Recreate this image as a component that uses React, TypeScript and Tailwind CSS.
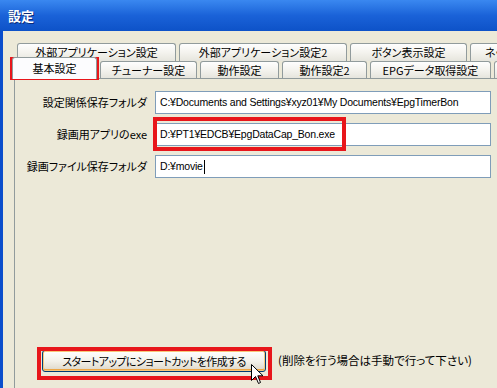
import React from 'react';

type TabDef = { label: string; w: string };

const row1: TabDef[] = [
  { label: '外部アプリケーション設定', w: 'w-[159px]' },
  { label: '外部アプリケーション設定2', w: 'w-[168px]' },
  { label: 'ボタン表示設定', w: 'w-[117px]' },
  { label: 'ネットワーク設定', w: 'w-[110px]' },
];

const row2: TabDef[] = [
  { label: 'チューナー設定', w: 'w-[97px]' },
  { label: '動作設定', w: 'w-[79px]' },
  { label: '動作設定2', w: 'w-[85px]' },
  { label: 'EPGデータ取得設定', w: 'w-[121px]' },
  { label: 'その他', w: 'w-[80px]' },
];

const Tab = ({ label, w }: TabDef) => (
  <div
    className={`${w} flex h-full shrink-0 justify-center overflow-hidden whitespace-nowrap rounded-t-[3px] border border-b-0 border-[#919B9C] bg-gradient-to-b from-[#FEFEFE] via-[#F4F3EE] to-[#E6E5DD] pt-[1px] leading-[14px]`}
  >
    {label}
  </div>
);

const fields = [
  { label: '設定関係保存フォルダ', value: 'C:¥Documents and Settings¥xyz01¥My Documents¥EpgTimerBon' },
  { label: '録画用アプリのexe', value: 'D:¥PT1¥EDCB¥EpgDataCap_Bon.exe' },
  { label: '録画ファイル保存フォルダ', value: 'D:¥movie', caret: true },
];

const Cursor = () => (
  <svg className="absolute left-[251px] top-[364px]" width="13" height="21" viewBox="0 0 13 21">
    <path d="M0.5 0.5 V16.5 L4.5 12.5 L7.5 19.5 L9.5 18.5 L6.8 11.8 H12 Z" fill="#fff" stroke="#000" strokeWidth="1" />
  </svg>
);

export default function App() {
  return (
    <div className="relative flex h-[388px] w-[497px] flex-col overflow-hidden bg-[#ECE9D8] font-['Noto_Sans_CJK_JP',sans-serif] text-[11px] text-black [font-feature-settings:'palt']">
      {/* title bar */}
      <div className="flex h-[31px] shrink-0 items-center bg-gradient-to-b from-[#3A88F0] via-[#1A62D8] to-[#0D52C8] pl-[8px]">
        <span className="text-[13px] font-bold text-white [text-shadow:1px_1px_0_#0A2A7A]">設定</span>
      </div>

      <div className="flex flex-1 flex-col border-l-[3px] border-[#0B4ECC]">
        {/* tab rows */}
        <div className="ml-[14px] mt-[12px] flex h-[18px] gap-[3px]">
          {row1.map((t) => (
            <Tab key={t.label} {...t} />
          ))}
        </div>
        <div className="flex h-[17px] items-end">
          <div className="relative z-10 ml-[9px] mr-[3px] flex h-[22px] w-[85px] shrink-0 justify-center self-start -mt-[4px] rounded-t-[3px] border border-b-0 border-[#919B9C] bg-[#FCFCFE] pt-[3px] leading-[14px]">
            基本設定
          </div>
          <div className="flex h-full gap-[3px]">
            {row2.map((t) => (
              <Tab key={t.label} {...t} />
            ))}
          </div>
        </div>

        {/* tab page */}
        <div className="ml-[11px] flex flex-1 flex-col border-l border-t border-[#919B9C] bg-[#ECE9D8] pt-[12px]">
          <div className="flex flex-col gap-[9px]">
            {fields.map((f) => (
              <div key={f.label} className="flex items-center gap-[8px]">
                <div className="w-[132px] shrink-0 text-right">{f.label}</div>
                <div className="flex h-[23px] w-[336px] shrink-0 items-center whitespace-nowrap border border-[#7F9DB9] bg-white pl-[4px] font-['Liberation_Sans',sans-serif] text-[10.5px] tracking-[-0.2px]">
                  {f.value}
                  {f.caret && <span className="ml-[1px] inline-block h-[14px] w-px bg-black" />}
                </div>
              </div>
            ))}
          </div>

          <div className="ml-[27px] mt-[172px] flex items-center">
            <button className="flex h-[22px] w-[224px] items-center justify-center rounded-[3px] border border-[#003C74] bg-gradient-to-b from-white via-[#F3F1EA] to-[#DCD6C8] text-[11px] tracking-[-0.6px] shadow-[inset_0_0_0_1px_#F8C77A,inset_0_-1px_0_1px_#EDA645]">
              スタートアップにショートカットを作成する
            </button>
            <span className="ml-[12px] whitespace-nowrap text-[11.5px]">(削除を行う場合は手動で行って下さい)</span>
          </div>
        </div>
      </div>

      {/* annotation boxes */}
      <div className="pointer-events-none absolute left-[10px] top-[57px] h-[23px] w-[89px] border-4 border-[#E8161B]" />
      <div className="pointer-events-none absolute left-[153px] top-[117px] h-[34px] w-[193px] border-4 border-[#E8161B]" />
      <div className="pointer-events-none absolute left-[37px] top-[347px] h-[33px] w-[235px] border-4 border-[#E8161B]" />

      <Cursor />
    </div>
  );
}
